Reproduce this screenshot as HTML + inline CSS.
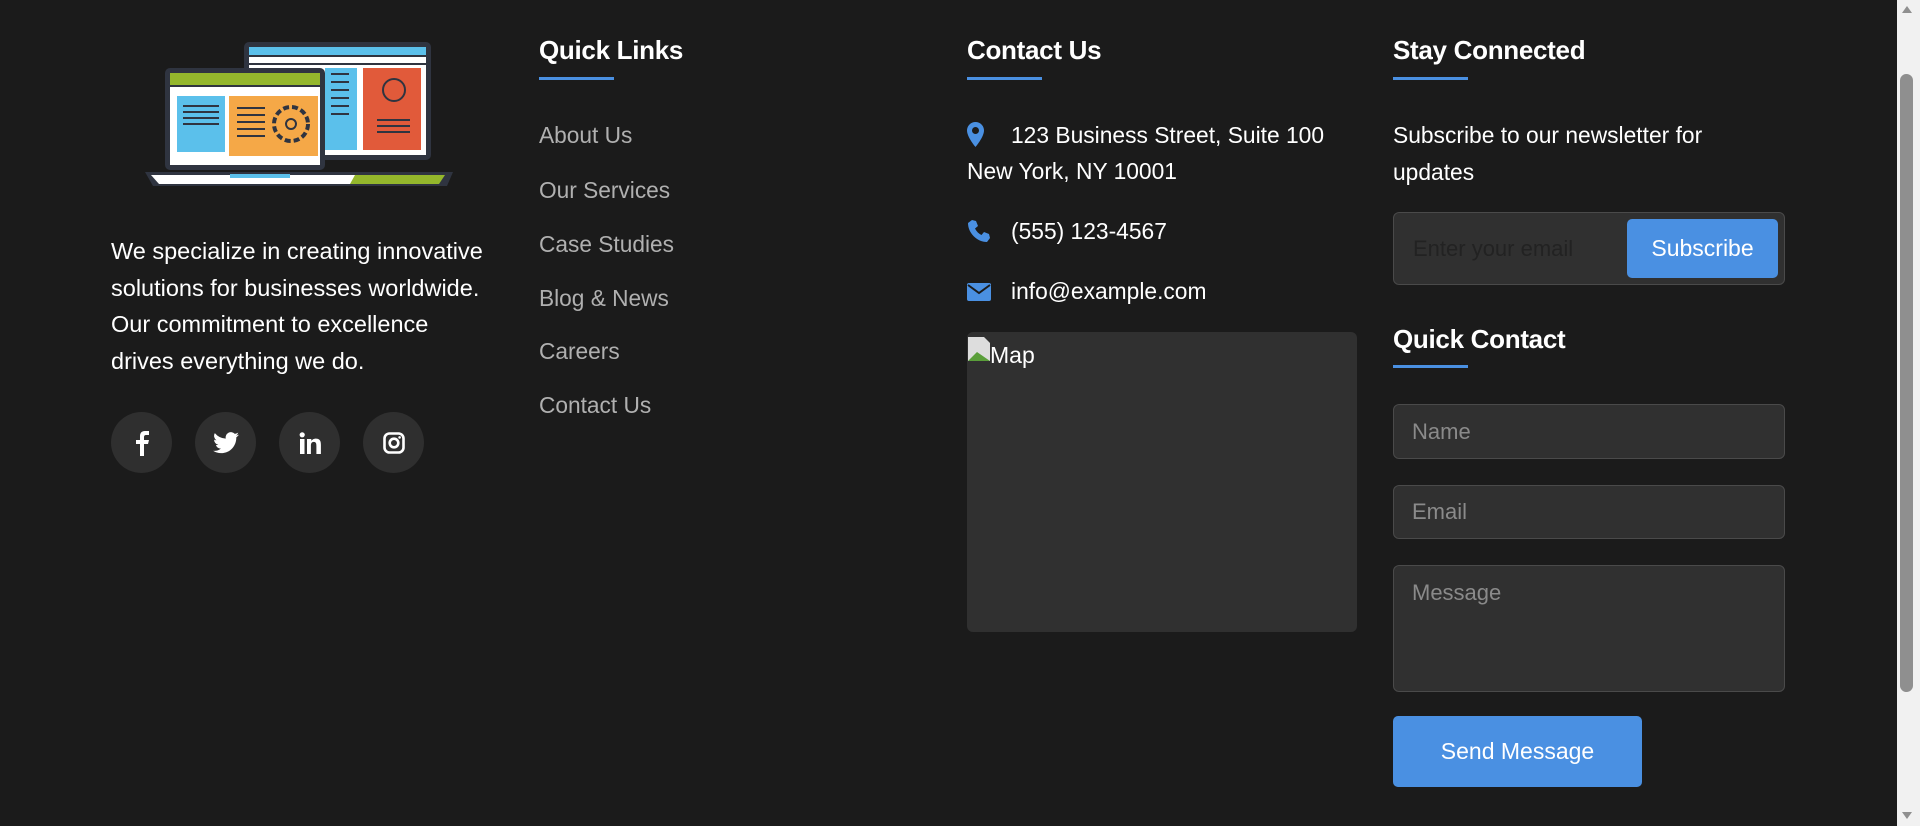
<!DOCTYPE html>
<html><head><meta charset="utf-8"><style>
*{margin:0;padding:0;box-sizing:border-box}
body{width:1920px;height:826px;background:#1b1b1b;font-family:"Liberation Sans",sans-serif;color:#fff;position:relative;overflow:hidden}
.a{position:absolute;white-space:nowrap}
h3{position:absolute;font-size:26px;font-weight:bold;color:#fff;letter-spacing:-0.3px}
.ul{position:absolute;height:3px;width:75px;background:#4a90e2}
.t{font-size:22.8px;line-height:36.7px}
.lk{font-size:22.7px;color:#b0b0b0}
.circ{position:absolute;width:61px;height:61px;border-radius:50%;background:#2f2f2f;top:412px;display:flex;align-items:center;justify-content:center}
.inp{position:absolute;left:1393px;width:392px;background:#303030;border:1px solid #4a4a4a;border-radius:6px;color:#8a8a8a;font-size:22px;padding-left:18px}
.btn{position:absolute;background:#4a90e2;border-radius:5px;color:#fff;font-size:23px;display:flex;align-items:center;justify-content:center}
</style></head><body>
<svg class="a" style="left:145px;top:40px" width="308" height="148" viewBox="0 0 308 148">
<rect x="99" y="2" width="187" height="118" rx="5" fill="#2f3440"/>
<rect x="104" y="7" width="177" height="8" fill="#5bc0eb"/>
<rect x="104" y="17" width="177" height="6" fill="#fff"/>
<rect x="104" y="25" width="177" height="90" fill="#fff"/>
<rect x="180" y="28" width="32" height="82" fill="#5bc0eb"/>
<rect x="218" y="28" width="58" height="82" fill="#e15a3a"/>
<rect x="20" y="28" width="160" height="102" rx="5" fill="#2f3440"/>
<rect x="25" y="33" width="150" height="12" fill="#94b72c"/>
<rect x="25" y="47" width="150" height="78" fill="#fff"/>
<rect x="32" y="56" width="48" height="56" fill="#5bc0eb"/>
<rect x="84" y="56" width="89" height="60" fill="#f5a847"/>
<g stroke="#2f3440" stroke-width="2"><line x1="38" y1="66" x2="74" y2="66"/><line x1="38" y1="72" x2="74" y2="72"/><line x1="38" y1="78" x2="74" y2="78"/><line x1="38" y1="84" x2="74" y2="84"/><line x1="92" y1="68" x2="120" y2="68"/><line x1="92" y1="75" x2="120" y2="75"/><line x1="92" y1="82" x2="120" y2="82"/><line x1="92" y1="89" x2="120" y2="89"/><line x1="92" y1="96" x2="120" y2="96"/><line x1="186" y1="34" x2="204" y2="34"/><line x1="186" y1="42" x2="204" y2="42"/><line x1="186" y1="50" x2="204" y2="50"/><line x1="186" y1="58" x2="204" y2="58"/><line x1="186" y1="66" x2="204" y2="66"/><line x1="186" y1="74" x2="204" y2="74"/><line x1="232" y1="80" x2="265" y2="80"/><line x1="232" y1="86" x2="265" y2="86"/><line x1="232" y1="92" x2="265" y2="92"/></g>
<circle cx="146" cy="84" r="17" fill="none" stroke="#2f3440" stroke-width="4" stroke-dasharray="6 3"/>
<circle cx="146" cy="84" r="5" fill="none" stroke="#2f3440" stroke-width="2"/>
<circle cx="249" cy="50" r="11" fill="none" stroke="#2f3440" stroke-width="2"/>
<path d="M0 132 H308 L302 146 H8 Z" fill="#2f3440"/>
<path d="M6 135 H210 V144 H14 Z" fill="#fff"/>
<path d="M210 135 H300 L294 144 H205 Z" fill="#94b72c"/>
<rect x="85" y="134" width="60" height="4" fill="#5bc0eb"/>
</svg>
<div class="a t" style="left:111px;top:233px;font-size:23.5px">We specialize in creating innovative<br>solutions for businesses worldwide.<br>Our commitment to excellence<br>drives everything we do.</div>
<div class="circ" style="left:111px"><svg width="18" height="26" viewBox="0 0 18 26"><path d="M11 26V14h4l1-4h-5V7c0-1 .5-2 2-2h3V1h-4C8 1 7 3.5 7 6.5V10H3v4h4v12z" fill="#fff"/></svg></div>
<div class="circ" style="left:195px"><svg width="26" height="22" viewBox="0 0 24 20"><path d="M24 2.3a10 10 0 0 1-2.8.8A5 5 0 0 0 23.3.4a10 10 0 0 1-3.1 1.2A4.9 4.9 0 0 0 11.8 6 14 14 0 0 1 1.7.9a4.9 4.9 0 0 0 1.5 6.6A4.9 4.9 0 0 1 1 6.9a4.9 4.9 0 0 0 3.9 4.8 5 5 0 0 1-2.2.1 4.9 4.9 0 0 0 4.6 3.4A9.9 9.9 0 0 1 0 17.200 14 14 0 0 0 7.5 19.4c9 0 14-7.5 14-14v-.6A10 10 0 0 0 24 2.3z" fill="#fff"/></svg></div>
<div class="circ" style="left:279px"><svg width="22" height="22" viewBox="0 0 22 22"><rect x="1" y="7" width="4.5" height="15" fill="#fff"/><circle cx="3.2" cy="2.8" r="2.6" fill="#fff"/><path d="M8 7h4.3v2c.7-1.3 2.3-2.4 4.6-2.4 4.3 0 5 2.8 5 6.4V22h-4.5v-7.9c0-1.9-.1-4.2-2.6-4.2s-2.9 2-2.9 4V22H8z" fill="#fff"/></svg></div>
<div class="circ" style="left:363px"><svg width="22" height="22" viewBox="0 0 22 22"><rect x="1.5" y="1.5" width="19" height="19" rx="5" fill="none" stroke="#fff" stroke-width="2.6"/><circle cx="11" cy="11" r="4.3" fill="none" stroke="#fff" stroke-width="2.6"/><circle cx="16.6" cy="5.4" r="1.3" fill="#fff"/></svg></div>

<h3 style="left:539px;top:35px">Quick Links</h3><div class="ul" style="left:539px;top:77px"></div>
<div class="a lk" style="left:539px;top:122px">About Us</div>
<div class="a lk" style="left:539px;top:177px">Our Services</div>
<div class="a lk" style="left:539px;top:231px">Case Studies</div>
<div class="a lk" style="left:539px;top:285px">Blog &amp; News</div>
<div class="a lk" style="left:539px;top:338px">Careers</div>
<div class="a lk" style="left:539px;top:392px">Contact Us</div>

<h3 style="left:967px;top:35px">Contact Us</h3><div class="ul" style="left:967px;top:77px"></div>
<svg class="a" style="left:967px;top:122px" width="17" height="25" viewBox="0 0 17 25"><path d="M8.5 0A8.5 8.5 0 0 0 0 8.5C0 15 8.5 25 8.5 25S17 15 17 8.5A8.5 8.5 0 0 0 8.5 0zm0 12a3.5 3.5 0 1 1 0-7 3.5 3.5 0 0 1 0 7z" fill="#4a90e2"/></svg>
<div class="a t" style="left:1011px;top:117px">123 Business Street, Suite 100</div>
<div class="a t" style="left:967px;top:153px">New York, NY 10001</div>
<svg class="a" style="left:967px;top:219px" width="24" height="24" viewBox="0 0 24 24"><path d="M5 1l4 1 2 5-3 2.5a14 14 0 0 0 6.5 6.5L17 13l5 2 1 4-3 4C10 23 1 14 1 4z" fill="#4a90e2"/></svg>
<div class="a t" style="left:1011px;top:213px">(555) 123-4567</div>
<svg class="a" style="left:967px;top:283px" width="24" height="18" viewBox="0 0 24 18"><rect width="24" height="18" rx="2" fill="#4a90e2"/><path d="M1 2l11 8 11-8" fill="none" stroke="#1b1b1b" stroke-width="2"/></svg>
<div class="a t" style="left:1011px;top:273px">info@example.com</div>
<div class="a" style="left:967px;top:332px;width:390px;height:300px;background:#303030;border-radius:6px"></div>
<svg class="a" style="left:967px;top:336px" width="24" height="26" viewBox="0 0 24 26"><path d="M1 1h16l6 6v18H1z" fill="#ddd"/><path d="M1 25l9-9 13 9z" fill="#5a9e3a"/></svg>
<div class="a" style="left:990px;top:342px;font-size:23px">Map</div>

<h3 style="left:1393px;top:35px">Stay Connected</h3><div class="ul" style="left:1393px;top:77px"></div>
<div class="a t" style="left:1393px;top:117px">Subscribe to our newsletter for<br>updates</div>
<div class="a" style="left:1393px;top:212px;width:392px;height:73px;background:#303030;border:1px solid #4a4a4a;border-radius:6px"></div>
<div class="a" style="left:1413px;top:236px;font-size:22px;color:#222">Enter your email</div>
<div class="btn" style="left:1627px;top:219px;width:151px;height:59px">Subscribe</div>
<h3 style="left:1393px;top:324px">Quick Contact</h3><div class="ul" style="left:1393px;top:365px"></div>
<div class="inp" style="top:404px;height:55px;line-height:53px">Name</div>
<div class="inp" style="top:485px;height:54px;line-height:52px">Email</div>
<div class="inp" style="top:565px;height:127px;padding-top:14px">Message</div>
<div class="btn" style="left:1393px;top:716px;width:249px;height:71px">Send Message</div>

<div class="a" style="left:1897px;top:0;width:23px;height:826px;background:#f1f1f1"></div>
<div class="a" style="left:1900px;top:74px;width:13px;height:618px;background:#8f8f8f;border-radius:7px"></div>
<div class="a" style="left:1902px;top:6px;width:0;height:0;border-left:5px solid transparent;border-right:5px solid transparent;border-bottom:7px solid #8f8f8f"></div>
<div class="a" style="left:1902px;top:812px;width:0;height:0;border-left:5px solid transparent;border-right:5px solid transparent;border-top:7px solid #8f8f8f"></div>
</body></html>
